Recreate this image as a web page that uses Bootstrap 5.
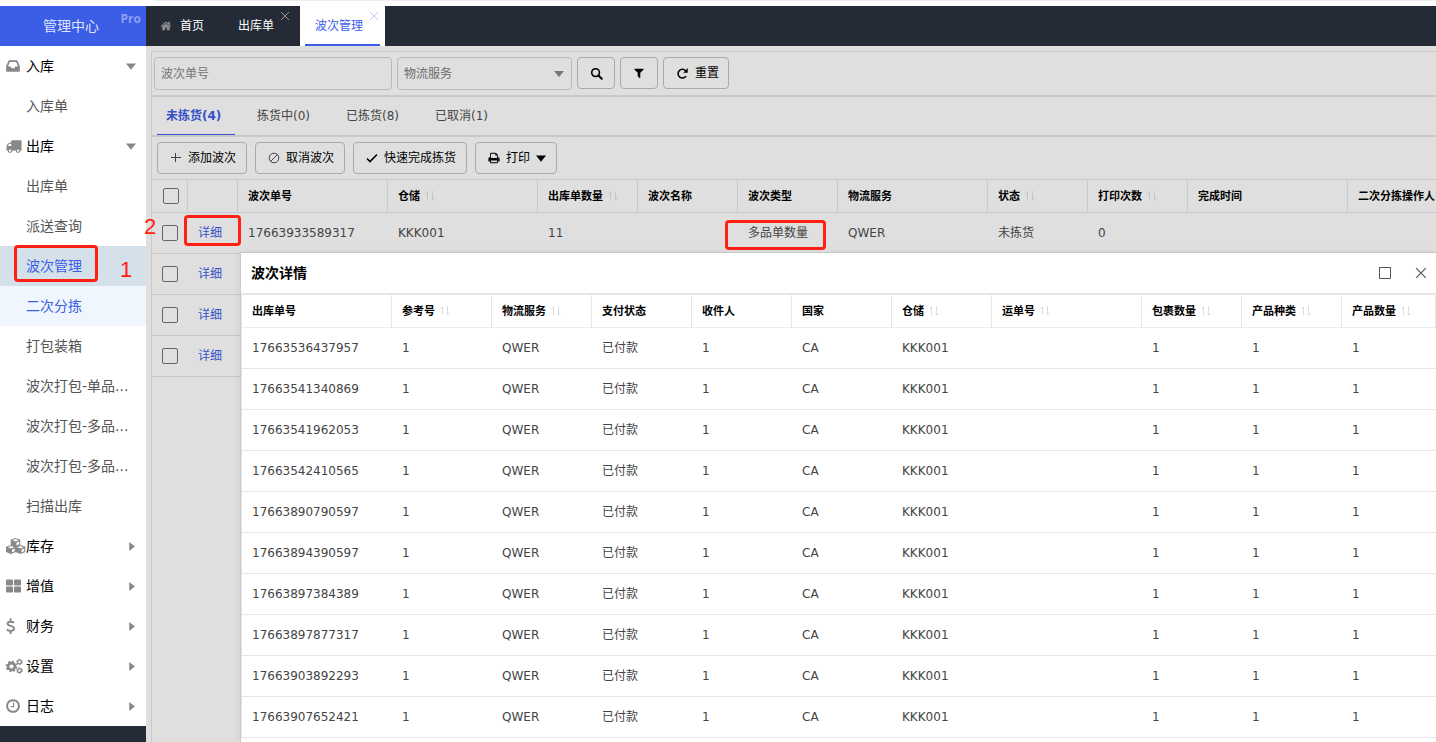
<!DOCTYPE html>
<html lang="zh-CN">
<head>
<meta charset="utf-8">
<meta name="viewport" content="width=device-width, initial-scale=1">
<title>波次管理</title>
<link href="https://cdn.jsdelivr.net/npm/bootstrap@5.3.0/dist/css/bootstrap.min.css" rel="stylesheet">
<style>
:root { --blue:#3c5de6; --link:#3651c9; --dark:#242a36; --shade:#dfdfdf; --line:#c9c9c9; --red:#ff2012; }
body { font-family:"DejaVu Sans","Noto Sans CJK SC",sans-serif; font-size:12px; line-height:20px; color:#333; background:#fff; }
a { text-decoration:none; color:inherit; }
svg { fill:currentColor; flex:none; }
.topgap { height:6px; }
.topgap i { margin-left:155px; height:1px; background:#eee; }
.side { width:146px; background:var(--dark); font-size:14px; }
.brand { height:40px; background:var(--blue); color:#dfe5fc; padding-right:4px; }
.brand sup { right:5px; top:7px; font:bold 12px/1 "Open Sans",sans-serif; color:#8da1f2; }
.menu a { height:40px; display:flex; align-items:center; padding-left:26px; color:#555; white-space:nowrap; position:relative; }
.menu a.grp { padding:0 10px 0 5px; color:#000; }
.menu .slot { width:21px; height:16px; color:#888; display:flex; align-items:center; }
.menu a.on { background:#d5e1ea; color:var(--blue); }
.menu a.near { background:#eff6fe; color:var(--blue); }
.tri { width:9px; height:9px; color:#888; }
.tri.open { width:10px; height:10px; }
.tabsbar { height:40px; background:var(--dark); color:#fff; }
.tabsbar a { height:40px; display:flex; align-items:center; position:relative; }
.tabsbar .t-home { width:77px; padding-left:14px; gap:8px; }
.tabsbar .t-home svg { color:#8b8b8b; }
.tabsbar .t-page { width:77px; padding-left:15px; }
.tabsbar .t-act { width:85px; padding-left:15px; background:#fff; color:var(--blue); }
.tabsbar .t-act::after { content:""; position:absolute; left:5px; right:5px; bottom:0; height:2px; background:var(--blue); }
.shut { position:absolute; right:6px; top:5px; color:#999; }
.t-page .shut { right:10px; }
.t-act .shut { color:#bcc7f4; }
.work { background:var(--shade); padding:5px 0 0 5px; }
.panel { border:1px solid var(--line); border-width:1px 0 0 1px; }
.srch { height:45px; padding:5px 0 0 2px; border-bottom:2px solid var(--line); gap:5px; }
.srch .form-control,.srch .form-select { height:33px; font-size:12px; background-color:transparent; border-color:#bbb; color:#6c6c6c; padding:0 6px; border-radius:4px; }
.srch .form-control::placeholder { color:#757575; }
.srch .form-control { width:238px; }
.srch .form-select { width:175px; background-image:url("data:image/svg+xml,%3Csvg xmlns='http://www.w3.org/2000/svg' viewBox='0 0 10 6'%3E%3Cpath fill='%23777' d='M0 0h10L5 6z'/%3E%3C/svg%3E"); background-size:10px 6px; background-position:right 7px center; }
.tool { height:32px; border:1px solid #a9abb0; border-radius:4px; font-size:12px; padding:0 10px 0 12px; color:#000; display:flex; align-items:center; gap:6px; line-height:20px; white-space:nowrap; }
.srch .tool { padding:0 9px 0 12px; }
.srch .sq { width:38px; padding:0; justify-content:center; }
.states { height:40px; border-bottom:2px solid var(--line); gap:13px; padding-left:5px; }
.states a { width:76px; height:38px; line-height:39px; padding-left:9px; color:#444; white-space:nowrap; }
.states a.cur { width:78px; font-weight:bold; color:var(--link); border-bottom:1px solid var(--link); }
.tools { height:42px; padding:5px 0 0 5px; gap:8px; }
.grid { table-layout:fixed; width:100%; min-width:1285px; border-collapse:separate; border-spacing:0; }
.grid th { height:33px; padding:2px 0 0 10px; font-size:11px; font-weight:bold; color:#000; white-space:nowrap; border-right:1px solid var(--ln); border-bottom:1px solid var(--hb); }
.grid td { height:41px; padding:0 0 0 10px; white-space:nowrap; border-bottom:1px solid var(--ln); position:relative; color:#444; }
.grid th.pick { padding:0 0 0 11px; }
.grid .srt { width:10px; height:10px; color:#c6c6c6; margin-left:5px; vertical-align:-1px; }
.waves { --ln:#c9c9c9; --hb:#c5cbd0; border-top:1px solid #c9c9c9; }
.waves td a { color:var(--link); }
.lines { --ln:#e6e6e6; --hb:#e6eff5; border-left:1px solid #e6e6e6; min-width:1195px; }
.lines .srt { color:#ddd; }
.form-check-input.pk { width:16px; height:16px; margin:0; border:1px solid #666; border-radius:2px; background-color:transparent; display:block; }
.dlg { position:absolute; left:240px; right:0; top:252px; bottom:0; background:#fff; border:1px solid var(--line); border-width:1px 0 0 1px; box-shadow:-2px 0 6px rgba(0,0,0,.06); }
.dlg header { height:42px; border-bottom:2px solid #e6e6e6; padding:0 9px 0 10px; font-size:14px; font-weight:bold; color:#000; }
.dlg header button { border:0; background:none; padding:0; color:#555; line-height:0; }
.ring { position:absolute; border:3px solid var(--red); border-radius:4px; pointer-events:none; z-index:2; }
.num { position:absolute; color:var(--red); font:22px/22px "Liberation Sans",sans-serif; z-index:2; }
.r-side { left:14px; top:-1px; width:84px; height:37px; }
.n-side { left:120px; top:13px; }
.r-det { left:-4px; top:2px; width:57px; height:31px; }
.n-det { left:-8px; top:3px; }
.r-type { left:-13px; top:7px; width:101px; height:30px; }
</style>
</head>
<body class="vh-100 overflow-hidden d-flex flex-column position-relative">
<svg width="0" height="0" class="position-absolute" aria-hidden="true">
  <symbol id="home" viewBox="0 0 1792 1792"><path d="M1472 992v480q0 26-19 45t-45 19h-384v-384h-256v384h-384q-26 0-45-19t-19-45v-480q0-1 .5-3t.5-3l575-474 575 474q1 2 1 6zm223-69l-62 74q-8 9-21 11h-3q-13 0-21-7l-692-577-692 577q-12 8-24 7-13-2-21-11l-62-74q-8-10-7-23.5t11-21.5l719-599q32-26 76-26t76 26l244 204v-195q0-14 9-23t23-9h192q14 0 23 9t9 23v408l219 182q10 8 11 21.5t-7 23.5z"/></symbol>
  <symbol id="search" viewBox="0 0 14 14"><circle cx="6" cy="6" r="4.200" fill="none" stroke="currentColor" stroke-width="1.700"/><path d="M9 9l3.600 3.600" stroke="currentColor" stroke-width="2.200" stroke-linecap="round"/></symbol>
  <symbol id="filter" viewBox="0 0 1792 1792"><path d="M1595 295q17 41-14 70l-493 493v742q0 42-39 59-13 5-25 5-27 0-45-19l-256-256q-19-19-19-45v-486l-493-493q-31-29-14-70 17-39 59-39h1280q42 0 59 39z"/></symbol>
  <symbol id="redo" viewBox="0 0 14 14"><path d="M10.800 9.800A4.700 4.700 0 1 1 10.300 3.800" fill="none" stroke="currentColor" stroke-width="1.700"/><path d="M12.600 1.200v5H7.800z"/></symbol>
  <symbol id="print" viewBox="0 0 1792 1792"><path d="M448 1536h896v-256h-896v256zm0-640h896v-384h-160q-40 0-68-28t-28-68v-160h-640v640zm1152 64q0-26-19-45t-45-19-45 19-19 45 19 45 45 19 45-19 19-45zm128 0v416q0 13-9.500 22.500t-22.500 9.500h-224v160q0 40-28 68t-68 28h-960q-40 0-68-28t-28-68v-160h-224q-13 0-22.500-9.500t-9.500-22.500v-416q0-79 56.500-135.500t135.500-56.500h64v-544q0-40 28-68t68-28h672q40 0 88 20t76 48l152 152q28 28 48 76t20 88v256h64q79 0 135.500 56.500t56.500 135.500z"/></symbol>
  <symbol id="inbox" viewBox="0 0 1792 1792"><path d="M1151 960h316q-1-3-2.500-8.500t-2.500-7.500l-212-496h-708l-212 496q-1 3-2.500 8.500t-2.500 7.500h316l95 192h320zm513 30v482q0 26-19 45t-45 19h-1408q-26 0-45-19t-19-45v-482q0-62 25-123l238-552q10-25 36.500-42t52.500-17h832q26 0 52.500 17t36.500 42l238 552q25 61 25 123z"/></symbol>
  <symbol id="truck" viewBox="0 0 1792 1792"><path d="M640 1408q0-52-38-90t-90-38-90 38-38 90 38 90 90 38 90-38 38-90zm-384-512h384v-256h-158q-13 0-22 9l-195 195q-9 9-9 22v30zm1280 512q0-52-38-90t-90-38-90 38-38 90 38 90 90 38 90-38 38-90zm256-1088v1024q0 15-4 26.500t-13.500 18.500-16.500 11.500-23.500 6-22.500 2-25.500 0-22.500-.5q0 106-75 181t-181 75-181-75-75-181h-384q0 106-75 181t-181 75-181-75-75-181h-64q-3 0-22.500.5t-25.500 0-22.500-2-23.500-6-16.500-11.500-13.500-18.500-4-26.500q0-26 19-45t45-19v-320q0-8-.5-35t0-38 2.500-34.500 6.500-37 14-30.500 22.500-30l198-198q19-19 50.500-32t58.500-13h160v-192q0-26 19-45t45-19h1024q26 0 45 19t19 45z"/></symbol>
  <symbol id="four" viewBox="0 0 16 16"><rect x="1" y="1.500" width="7" height="6" rx="1"/><rect x="9" y="1.500" width="7" height="6" rx="1"/><rect x="1" y="8.500" width="7" height="6" rx="1"/><rect x="9" y="8.500" width="7" height="6" rx="1"/></symbol>
  <symbol id="clock" viewBox="0 0 1792 1792"><path d="M1024 544v448q0 14-9 23t-23 9h-320q-14 0-23-9t-9-23v-64q0-14 9-23t23-9h224v-352q0-14 9-23t23-9h64q14 0 23 9t9 23zm416 352q0-148-73-273t-198-198-273-73-273 73-198 198-73 273 73 273 198 198 273 73 273-73 198-198 73-273zm224 0q0 209-103 385.500t-279.500 279.500-385.500 103-385.500-103-279.500-279.500-103-385.500 103-385.500 279.500-279.500 385.500-103 385.500 103 279.500 279.500 103 385.500z"/></symbol>
  <symbol id="coin" viewBox="0 0 16 16"><path d="M9 4.800C8 3.600 2.600 2.900 2.500 5.600c0 3 6.600 1.600 6.600 4.900 0 3.100-5.600 2.900-7.300 1M5.600.3v3M5.600 13v3" fill="none" stroke="currentColor" stroke-width="1.900"/></symbol>
  <symbol id="gears" viewBox="0 0 18 16"><g fill="none" stroke="currentColor"><circle cx="6.500" cy="8.500" r="3.400" stroke-width="2.600"/><circle cx="6.500" cy="8.500" r="5.100" stroke-width="1.500" stroke-dasharray="2 2"/><circle cx="14.500" cy="4" r="1.900" stroke-width="1.300"/><circle cx="14.500" cy="4" r="2.900" stroke-width="1" stroke-dasharray="1.520 1.520"/><circle cx="14.500" cy="12.500" r="1.900" stroke-width="1.300"/><circle cx="14.500" cy="12.500" r="2.900" stroke-width="1" stroke-dasharray="1.520 1.520"/></g></symbol>
  <symbol id="cube" viewBox="0 0 10 9"><path d="M5 0l5 1.800v5.200L5 9 0 7V1.800z"/><path d="M5 1l3.200 1.200L5 3.500 1.800 2.200zM6 4.700l2.700-1.100v2.500L6 7.400z" fill="#fff"/></symbol>
  <symbol id="cubes" viewBox="0 0 21 16"><use href="#cube" x="5.500" y="0" width="10" height="9"/><use href="#cube" x="1" y="7" width="10" height="9"/><use href="#cube" x="10.500" y="7" width="10" height="9"/></symbol>
  <symbol id="down" viewBox="0 0 8 8"><path d="M0 2h8L4 7z"/></symbol>
  <symbol id="right" viewBox="0 0 8 8"><path d="M2 0v8l5-4z"/></symbol>
  <symbol id="cross" viewBox="0 0 10 10"><path d="M1 1l8 8M9 1L1 9" fill="none" stroke="currentColor"/></symbol>
  <symbol id="sort" viewBox="0 0 10 10"><path d="M2.500 9V1M.5 3l2-2.300M7.500 0v9M9.500 7l-2 2.300" fill="none" stroke="currentColor"/></symbol>
</svg>

<div class="topgap flex-shrink-0"><i class="d-block"></i></div>
<div class="d-flex flex-grow-1">
  <aside class="side flex-shrink-0">
    <div class="brand position-relative d-flex align-items-center justify-content-center">管理中心<sup class="position-absolute">Pro</sup></div>
    <nav class="menu bg-white">
      <a href="#" class="grp"><span class="slot"><svg width="16" height="16"><use href="#inbox"/></svg></span>入库<svg class="tri open ms-auto"><use href="#down"/></svg></a>
      <a href="#">入库单</a>
      <a href="#" class="grp"><span class="slot"><svg width="17" height="16"><use href="#truck"/></svg></span>出库<svg class="tri open ms-auto"><use href="#down"/></svg></a>
      <a href="#">出库单</a>
      <a href="#">派送查询</a>
      <a href="#" class="on">波次管理<span class="ring r-side"></span><span class="num n-side">1</span></a>
      <a href="#" class="near">二次分拣</a>
      <a href="#">打包装箱</a>
      <a href="#">波次打包-单品...</a>
      <a href="#">波次打包-多品...</a>
      <a href="#">波次打包-多品...</a>
      <a href="#">扫描出库</a>
      <a href="#" class="grp"><span class="slot"><svg width="21" height="16"><use href="#cubes"/></svg></span>库存<svg class="tri ms-auto"><use href="#right"/></svg></a>
      <a href="#" class="grp"><span class="slot"><svg width="16" height="16"><use href="#four"/></svg></span>增值<svg class="tri ms-auto"><use href="#right"/></svg></a>
      <a href="#" class="grp"><span class="slot"><svg width="16" height="16"><use href="#coin"/></svg></span>财务<svg class="tri ms-auto"><use href="#right"/></svg></a>
      <a href="#" class="grp"><span class="slot"><svg width="18" height="16"><use href="#gears"/></svg></span>设置<svg class="tri ms-auto"><use href="#right"/></svg></a>
      <a href="#" class="grp"><span class="slot"><svg width="16" height="16"><use href="#clock"/></svg></span>日志<svg class="tri ms-auto"><use href="#right"/></svg></a>
    </nav>
  </aside>

  <main class="flex-grow-1 d-flex flex-column" style="min-width:0">
    <nav class="tabsbar d-flex flex-shrink-0">
      <a href="#" class="t-home"><svg width="12" height="12"><use href="#home"/></svg>首页</a>
      <a href="#" class="t-page">出库单<svg class="shut" width="10" height="10"><use href="#cross"/></svg></a>
      <a href="#" class="t-act">波次管理<svg class="shut" width="10" height="10"><use href="#cross"/></svg></a>
    </nav>
    <div class="work flex-grow-1">
      <div class="panel h-100">
        <form class="srch d-flex">
          <input class="form-control" type="text" placeholder="波次单号" aria-label="波次单号">
          <select class="form-select" aria-label="物流服务"><option>物流服务</option></select>
          <button type="button" class="btn tool sq" aria-label="搜索"><svg width="13" height="13"><use href="#search"/></svg></button>
          <button type="button" class="btn tool sq" aria-label="筛选"><svg width="12" height="12"><use href="#filter"/></svg></button>
          <button type="button" class="btn tool"><svg width="13" height="13"><use href="#redo"/></svg>重置</button>
        </form>
        <nav class="states d-flex">
          <a href="#" class="cur">未拣货(4)</a><a href="#">拣货中(0)</a><a href="#">已拣货(8)</a><a href="#">已取消(1)</a>
        </nav>
        <div class="tools d-flex">
          <button class="btn tool"><svg width="12" height="12" viewBox="0 0 12 12"><path d="M1 5.500h10M5.500 1v9" fill="none" stroke="#444"/></svg>添加波次</button>
          <button class="btn tool"><svg width="12" height="12" viewBox="0 0 12 12"><path d="M2.500 9.500l7-7" stroke="#444"/><circle cx="6" cy="6" r="4.800" fill="none" stroke="#444"/></svg>取消波次</button>
          <button class="btn tool"><svg width="12" height="12" viewBox="0 0 12 12"><path d="M1 6.500l3 3L11 2.500" fill="none" stroke="#000" stroke-width="1.600"/></svg>快速完成拣货</button>
          <button class="btn tool"><svg width="12" height="12"><use href="#print"/></svg>打印<svg width="10" height="10"><use href="#down"/></svg></button>
        </div>
        <table class="grid waves" id="waves">
          <colgroup></colgroup><thead></thead><tbody></tbody>
        </table>
      </div>
    </div>
  </main>
</div>

<section class="dlg overflow-hidden" role="dialog" aria-label="波次详情">
  <header class="d-flex align-items-center">
    <span class="flex-grow-1">波次详情</span>
    <button aria-label="最大化" class="me-4"><svg width="12" height="12" viewBox="0 0 12 12"><path d="M.5.5h11v11H.5z" fill="none" stroke="currentColor"/><path d="M0 0h12v1H0z"/></svg></button>
    <button aria-label="关闭"><svg width="12" height="12"><use href="#cross"/></svg></button>
  </header>
  <table class="grid lines" id="lines"><colgroup></colgroup><thead></thead><tbody></tbody></table>
</section>

<script>
const srt = '<svg class="srt"><use href="#sort"/></svg>';
const box = label => `<input type="checkbox" class="form-check-input pk" aria-label="${label}">`;
function build(id, cols, rows) {
  const t = document.getElementById(id);
  t.querySelector('colgroup').innerHTML = cols.map(c => c[1] ? `<col style="width:${c[1]}px">` : '<col>').join('');
  t.tHead.innerHTML = '<tr>' + cols.map(c => `<th${c[3] ? ' class="pick"' : ''}>${c[0]}${c[2] ? srt : ''}</th>`).join('') + '</tr>';
  t.tBodies[0].innerHTML = rows.map(r => '<tr>' + cols.map((c, i) => `<td>${r[i] ?? ''}</td>`).join('') + '</tr>').join('');
}
const link = '<a href="#">详细</a>';
build('waves',
  [[box('全选'),36,0,1],['',50],['波次单号',150],['仓储',150,1],['出库单数量',100,1],['波次名称',100],['波次类型',100],['物流服务',150],['状态',100,1],['打印次数',100,1],['完成时间',160],['二次分拣操作人']],
  [[box('选择') + '<span class="num n-det">2</span>', link + '<span class="ring r-det"></span>', '17663933589317','KKK001','11','','多品单数量<span class="ring r-type"></span>','QWER','未拣货','0'],
   [box('选择'),link],[box('选择'),link],[box('选择'),link]]);
build('lines',
  [['出库单号',150],['参考号',100,1],['物流服务',100,1],['支付状态',100],['收件人',100],['国家',100],['仓储',100,1],['运单号',150,1],['包裹数量',100,1],['产品种类',100,1],['产品数量',0,1]],
  ['17663536437957','17663541340869','17663541962053','17663542410565','17663890790597','17663894390597','17663897384389','17663897877317','17663903892293','17663907652421']
    .map(n => [n,'1','QWER','已付款','1','CA','KKK001','','1','1','1']));
</script>
<script src="https://cdn.jsdelivr.net/npm/bootstrap@5.3.0/dist/js/bootstrap.bundle.min.js"></script>
</body>
</html>
